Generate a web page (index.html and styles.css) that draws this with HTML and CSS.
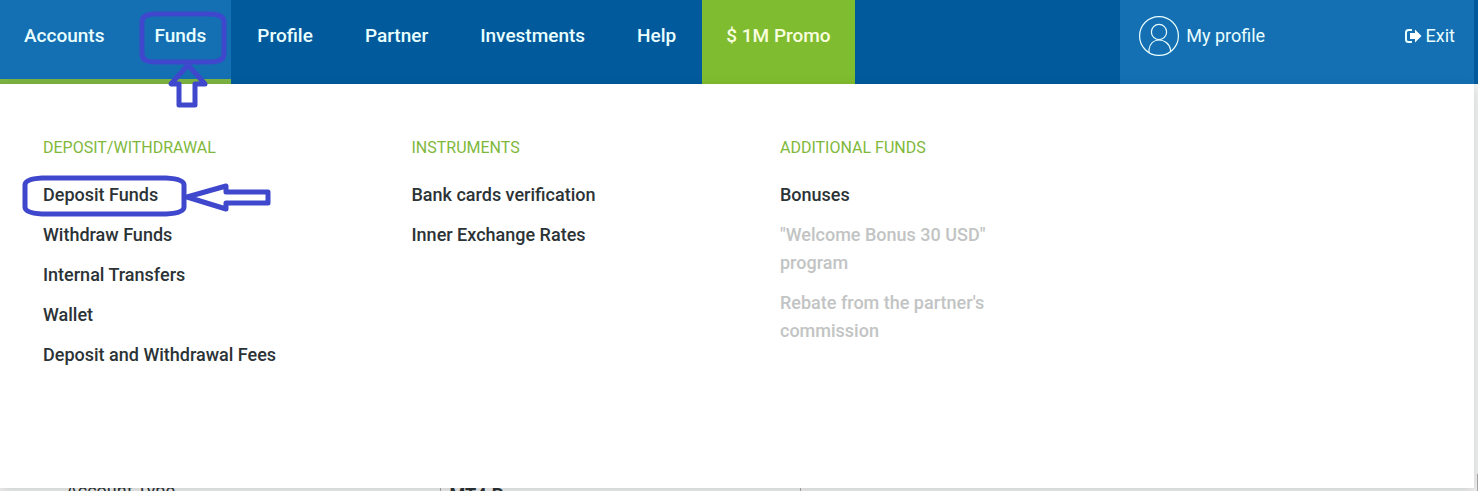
FILE: index.html
```html
<!DOCTYPE html>
<html lang="en">
    <head>
        <meta charset="UTF-8" />
        <meta name="viewport" content="width=device-width, initial-scale=1.0" />
        <title>Funds</title>
        <link rel="stylesheet" href="styles.css">
    </head>
    <body>
        <header class="header">
            <nav class="nav">
                <a href="#" class="active first">Accounts</a>
                <a href="#" class="active marked">Funds
                    <svg class="mark-nav" width="88" height="98" viewBox="0 0 88 98" aria-hidden="true">
                        <path d="M16 3H70Q85 3 85 11V43Q85 51 70 51H16Q3 51 3 43V11Q3 3 16 3Z" />
                        <path d="M49 54L32 73H40V94H56V73H66Z" />
                    </svg>
                </a>
                <a href="#">Profile</a>
                <a href="#">Partner</a>
                <a href="#">Investments</a>
                <a href="#">Help</a>
                <a href="#" class="promo">$ 1M Promo</a>
            </nav>
            <div class="user">
                <a href="#" class="profile">
                    <svg width="40" height="40" viewBox="0 0 40 40" aria-hidden="true">
                        <circle cx="20" cy="20" r="19.4" />
                        <circle cx="20" cy="16" r="7.6" />
                        <path d="M10 36.500V33.500C11 27.500 15 24 20 24S30.500 27.500 31.500 33.500V35.500" />
                    </svg>
                    My profile
                </a>
                <a href="#" class="exit">
                    <svg width="17" height="14" viewBox="0 0 17 14" aria-hidden="true">
                        <path class="door" d="M7 1H3.500Q1 1 1 3.500V10.500Q1 13 3.500 13H7" />
                        <path class="arrow" d="M5 4H10V0.500L16.500 7L10 13.500V10H5Z" />
                    </svg>
                    Exit
                </a>
            </div>
        </header>

        <div class="menu">
            <section>
                <h2>DEPOSIT/WITHDRAWAL</h2>
                <ul>
                    <li>
                        <a href="#" class="marked">Deposit Funds
                            <svg class="mark-link" width="250" height="42" viewBox="0 0 250 42" aria-hidden="true">
                                <path d="M20 3H144Q162 4 162 10V32Q162 38 144 39H20Q3 38 3 32V10Q3 4 20 3Z" />
                                <path d="M165 22L204 11V17H246V28H204V34Z" />
                            </svg>
                        </a>
                    </li>
                    <li><a href="#">Withdraw Funds</a></li>
                    <li><a href="#">Internal Transfers</a></li>
                    <li><a href="#">Wallet</a></li>
                    <li><a href="#">Deposit and Withdrawal Fees</a></li>
                </ul>
            </section>
            <section>
                <h2>INSTRUMENTS</h2>
                <ul>
                    <li><a href="#">Bank cards verification</a></li>
                    <li><a href="#">Inner Exchange Rates</a></li>
                </ul>
            </section>
            <section>
                <h2>ADDITIONAL FUNDS</h2>
                <ul>
                    <li><a href="#">Bonuses</a></li>
                    <li><a class="disabled">"Welcome Bonus 30 USD" program</a></li>
                    <li><a class="disabled">Rebate from the partner's commission</a></li>
                </ul>
            </section>
        </div>

        <table class="account">
            <tr>
                <th scope="row">Account Type</th>
                <td>MT4.Pro</td>
                <td></td>
            </tr>
        </table>
    </body>
</html>
```

FILE: styles.css
```css
* {
    margin: 0;
    padding: 0;
    box-sizing: border-box;
}

body {
    height: 100vh;
    overflow: hidden;
    position: relative;
    background: #f0f1f1;
    font-family: Roboto, "Noto Sans", sans-serif;
    color: #2b3336;
}

a {
    color: inherit;
    text-decoration: none;
}

.header {
    display: flex;
    justify-content: space-between;
    height: 84px;
    padding-right: 4px;
    background: #005a9b;
    color: #eaffff;
}

.nav {
    display: flex;
}

.nav a {
    padding: 0 26px;
    border-bottom: 5px solid transparent;
    font-size: 19px;
    font-weight: 500;
    line-height: 72px;
    white-space: nowrap;
}

.nav .active {
    padding: 0 25px;
    background: #1470b3;
    border-bottom-color: #7cb342;
}

.nav .first {
    padding-left: 24px;
}

.nav .promo {
    padding: 0 24px;
    background: #80bc2f;
    border-bottom-color: #80bc2f;
    color: #faffe0;
}

.user {
    display: flex;
    justify-content: space-between;
    flex: 0 0 24%;
    padding: 0 19px 13px;
    font-size: 18px;
    background: #1470b3;
}

.user a {
    display: flex;
    align-items: center;
}

.user svg {
    fill: none;
    stroke: #eaffff;
}

.profile {
    gap: 7px;
}

.profile svg {
    stroke-width: 1.2;
}

.exit {
    gap: 4px;
}

.exit .door {
    stroke-width: 2;
}

.exit .arrow {
    fill: #fff;
    stroke: none;
}

/* hand-drawn marks over the links */
.marked {
    position: relative;
}

.marked svg {
    position: absolute;
    z-index: 2;
    overflow: visible;
    fill: none;
    stroke: #3f48cc;
    stroke-width: 5;
    stroke-linejoin: round;
    pointer-events: none;
}

.nav .mark-nav {
    left: 10px;
    top: 11px;
}

.menu .mark-link {
    left: -21px;
    top: -6px;
}

.menu {
    position: absolute;
    top: 84px;
    left: 0;
    right: 4px;
    height: 404px;
    display: grid;
    grid-template-columns: repeat(4, 1fr);
    padding-top: 50px;
    background: #fff;
    box-shadow: 0 4px 12px rgba(0, 0, 0, 0.14);
}

.menu section {
    padding: 0 60px 0 43px;
}

.menu h2 {
    margin-bottom: 19px;
    color: #80b83c;
    font-size: 16px;
    font-weight: 400;
    line-height: 28px;
}

.menu ul {
    list-style: none;
}

.menu li {
    margin-bottom: 12px;
    font-size: 18px;
    font-weight: 500;
    line-height: 28px;
}

.menu li a {
    display: block;
}

.menu .disabled {
    color: #c2c4c4;
}

.account {
    width: 100%;
    margin-top: 390px;
    border-collapse: collapse;
    table-layout: fixed;
    text-align: left;
}

.account th,
.account td {
    height: 32px;
    padding-left: 9px;
    border-right: 1px solid #aaa;
    font-size: 18px;
}

.account th {
    width: 440px;
    padding-left: 66px;
    font-weight: 400;
}

.account td {
    padding-top: 8px;
    font-weight: 700;
}

.account td:nth-child(2) {
    width: 360px;
}
```
